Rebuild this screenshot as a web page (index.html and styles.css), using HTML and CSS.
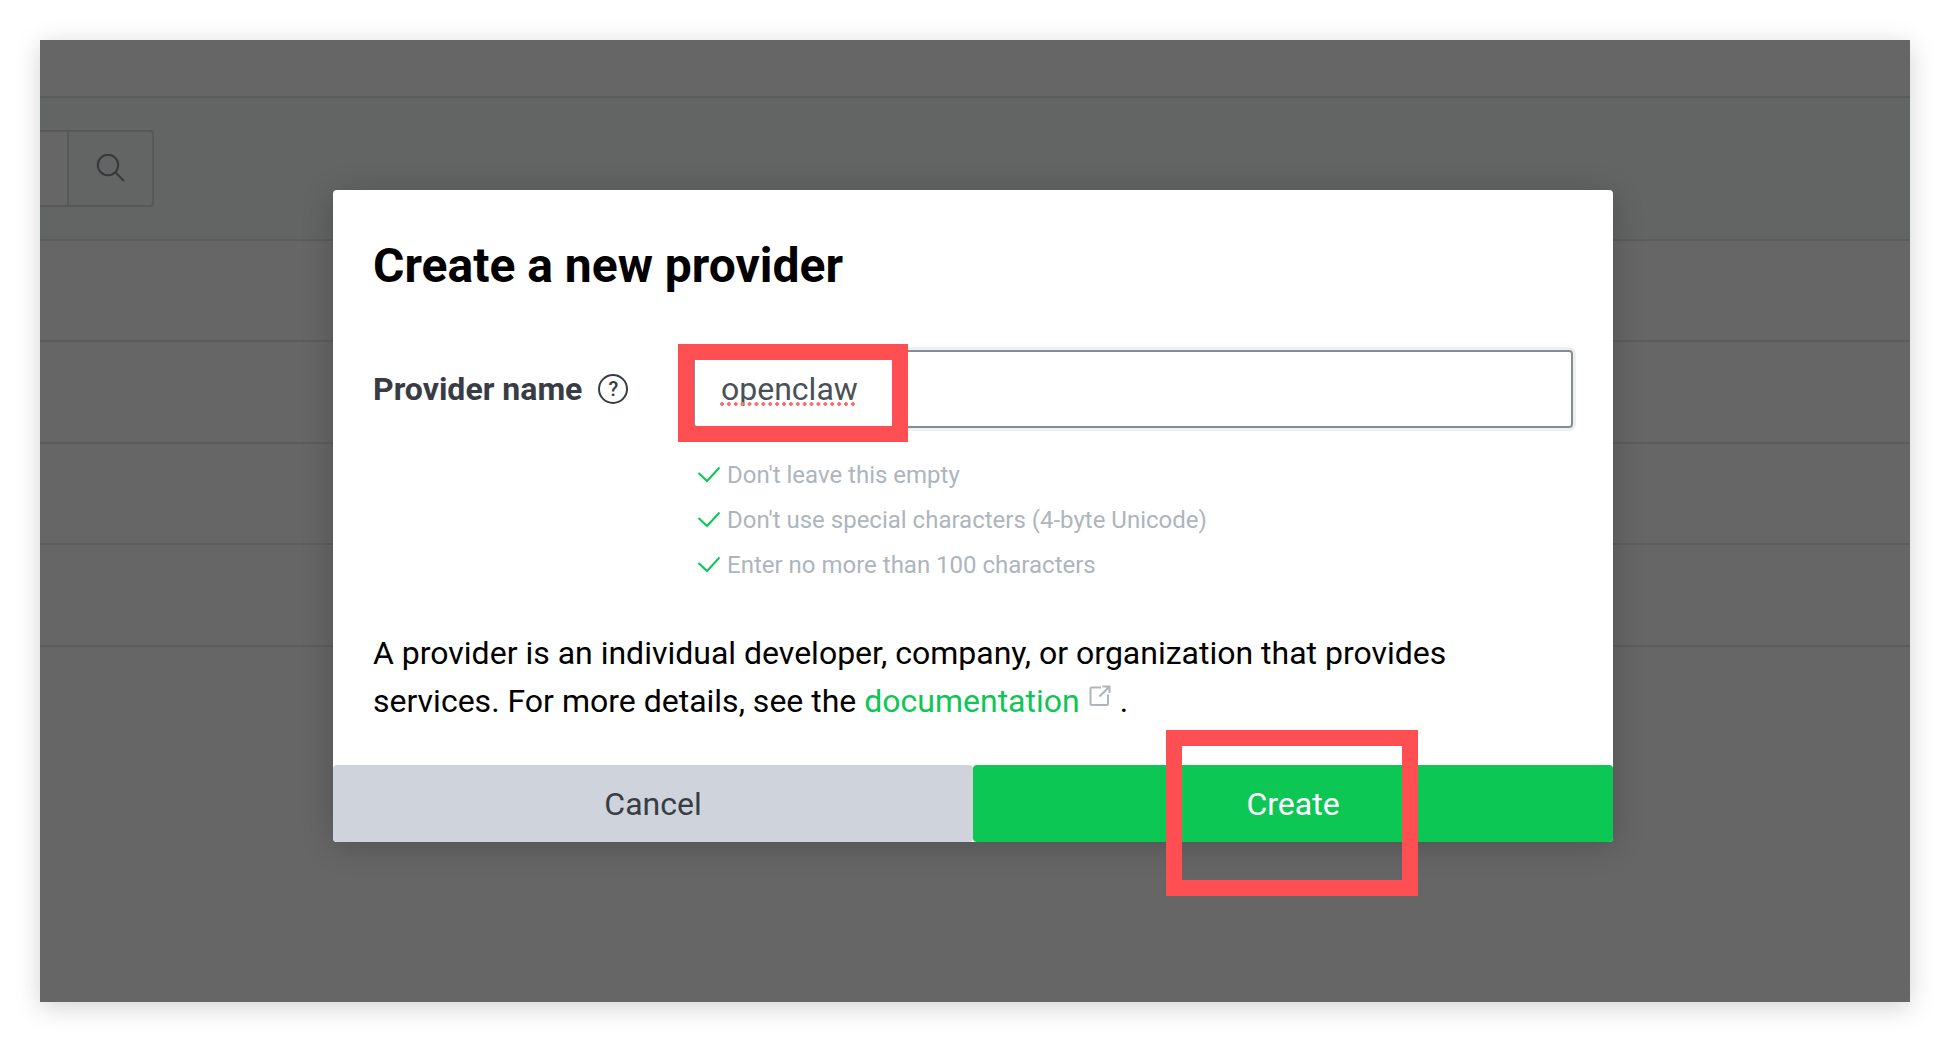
FILE: index.html
```html
<!DOCTYPE html>
<html lang="en">
<head>
<meta charset="utf-8">
<title>Create a new provider</title>
<link rel="stylesheet" href="styles.css">
</head>
<body>
<main class="frame">
  <div class="backdrop">
    <div class="topbar"></div>
    <form class="toolbar" role="search">
      <input class="search-input" type="text" aria-label="Search providers">
      <button class="search-button" type="button" aria-label="Search">
        <svg width="30" height="30" viewBox="0 0 30 30" fill="none" stroke="#36393c" stroke-width="2"><circle cx="12" cy="11" r="10.2"/><path d="M19 18l9 9"/></svg>
      </button>
    </form>
    <div class="row"></div>
    <div class="row"></div>
    <div class="row"></div>
    <div class="row"></div>
  </div>

  <div class="overlay">
    <section class="modal" role="dialog" aria-labelledby="dialog-title">
      <div class="modal-body">
        <h1 class="title" id="dialog-title">Create a new provider</h1>
        <div class="form-row">
          <div class="label-cell">
            <label for="provider-name">Provider name</label>
            <button class="help" type="button" aria-label="Help">?</button>
          </div>
          <div class="field">
            <div class="input-wrap">
              <input class="name-input" id="provider-name" type="text" value="openclaw" spellcheck="false">
              <span class="spelling"></span>
              <span class="marker marker-input"></span>
            </div>
            <ul class="hints">
              <li><svg class="check" width="24" height="18" viewBox="0 0 24 18"><path d="M1.500 7l8.500 8L22.500 1.500"/></svg>Don't leave this empty</li>
              <li><svg class="check" width="24" height="18" viewBox="0 0 24 18"><path d="M1.500 7l8.500 8L22.500 1.500"/></svg>Don't use special characters (4-byte Unicode)</li>
              <li><svg class="check" width="24" height="18" viewBox="0 0 24 18"><path d="M1.500 7l8.500 8L22.500 1.500"/></svg>Enter no more than 100 characters</li>
            </ul>
          </div>
        </div>
        <p class="note">A provider is an individual developer, company, or organization that provides services. For more details, see the <a href="#">documentation<svg class="external" width="22" height="22" viewBox="0 0 22 22"><path d="M12 2.500H2.500a1 1 0 0 0-1 1V19a1 1 0 0 0 1 1H18a1 1 0 0 0 1-1V9.500"/><path d="M10.500 11.500L19.500 2.500M13.500 1.500H20.500V8"/></svg></a> .</p>
      </div>
      <div class="actions">
        <button class="button cancel" type="button">Cancel</button>
        <div class="create-wrap">
          <button class="button create" type="button">Create</button>
          <span class="marker marker-create"></span>
        </div>
      </div>
    </section>
  </div>
</main>
</body>
</html>
```
FILE: styles.css
```css
* { box-sizing: border-box; }

body {
  margin: 0;
  padding: 40px;
  background: #fff;
  color: #000;
  font-family: Roboto, "Liberation Sans", sans-serif;
  font-size: 32px;
}

button, input { font: inherit; }

.frame {
  display: grid;
  min-height: calc(100vh - 80px);
  background: #666;
  box-shadow: 0 5px 24px rgba(0, 0, 0, 0.18);
}

.backdrop, .overlay { grid-area: 1 / 1; }

.topbar {
  height: 58px;
  border-bottom: 2px solid #5a5c5b;
}

.toolbar {
  display: flex;
  align-items: center;
  height: 143px;
  background: #626564;
  border-bottom: 2px solid #5a5c5b;
}

.search-input {
  width: 29px;
  height: 77px;
  padding: 0;
  background: #666;
  border: 2px solid #575959;
  border-left: 0;
}

.search-button {
  display: flex;
  align-items: center;
  justify-content: center;
  width: 85px;
  height: 77px;
  padding: 0;
  background: none;
  border: 2px solid #575959;
  border-left: 0;
  border-radius: 0 4px 4px 0;
}

.row {
  height: 101px;
  border-bottom: 2px solid #5c5c5c;
}

.row:nth-child(even) { height: 102px; }

.overlay {
  position: relative;
  padding: 150px 20px 40px 16px;
}

.modal {
  width: 100%;
  max-width: 1280px;
  margin: 0 auto;
  background: #fff;
  border-radius: 4px;
  box-shadow: 0 4px 32px rgba(0, 0, 0, 0.2);
}

.modal-body { padding: 40px; }

.title {
  margin: 0 0 48px;
  font-size: 48px;
  font-weight: 700;
  line-height: 72px;
}

.form-row {
  display: grid;
  grid-template-columns: 320px 1fr;
}

.label-cell {
  display: flex;
  align-items: center;
  gap: 16px;
  height: 77px;
  color: #383d45;
  font-weight: 700;
}

.help {
  width: 30px;
  height: 30px;
  padding: 0;
  background: none;
  border: 2px solid #383d45;
  border-radius: 50%;
  color: #383d45;
  font-size: 20px;
  font-weight: 500;
  line-height: 26px;
}

.input-wrap { position: relative; }

.name-input {
  display: block;
  width: 100%;
  height: 78px;
  padding: 0 26px;
  background: #fff;
  border: 2px solid #838d96;
  border-radius: 4px;
  box-shadow: 0 0 0 3px #efeff2;
  color: #495057;
  outline: 0;
}

.spelling {
  position: absolute;
  top: 52px;
  left: 27px;
  width: 138px;
  height: 4px;
  background: radial-gradient(circle at 2px 2px, #ff6f69 2px, transparent 2px) 0 0 / 7px 4px round;
}

.marker {
  position: absolute;
  border: 16px solid #ff4f52;
  pointer-events: none;
}

.marker-input {
  top: -6px;
  left: -15px;
  width: 230px;
  height: 98px;
}

.marker-create {
  top: -35px;
  left: calc(50% - 127px);
  width: 252px;
  height: 166px;
}

.hints {
  margin: 0;
  padding: 24px 4px 0;
  list-style: none;
  color: #adb5bd;
  font-size: 24px;
}

.hints li {
  display: flex;
  align-items: center;
  gap: 6px;
  min-height: 45px;
}

.check {
  flex: none;
  fill: none;
  stroke: #0dc755;
  stroke-width: 2;
}

.note {
  margin: 42px 0 0;
  line-height: 48px;
}

.note a {
  color: #0dc755;
  text-decoration: none;
}

.external {
  margin: 0 1px 0 9px;
  vertical-align: 5px;
  fill: none;
  stroke: #adb5bd;
  stroke-width: 2;
}

.actions {
  display: grid;
  grid-template-columns: 1fr 1fr;
}

.create-wrap { position: relative; }

.button {
  width: 100%;
  height: 77px;
  padding: 0;
  border: 0;
  border-radius: 4px;
}

.cancel {
  background: #ced3dc;
  color: #383d45;
}

.create {
  background: #0dc755;
  color: #fff;
}
```
